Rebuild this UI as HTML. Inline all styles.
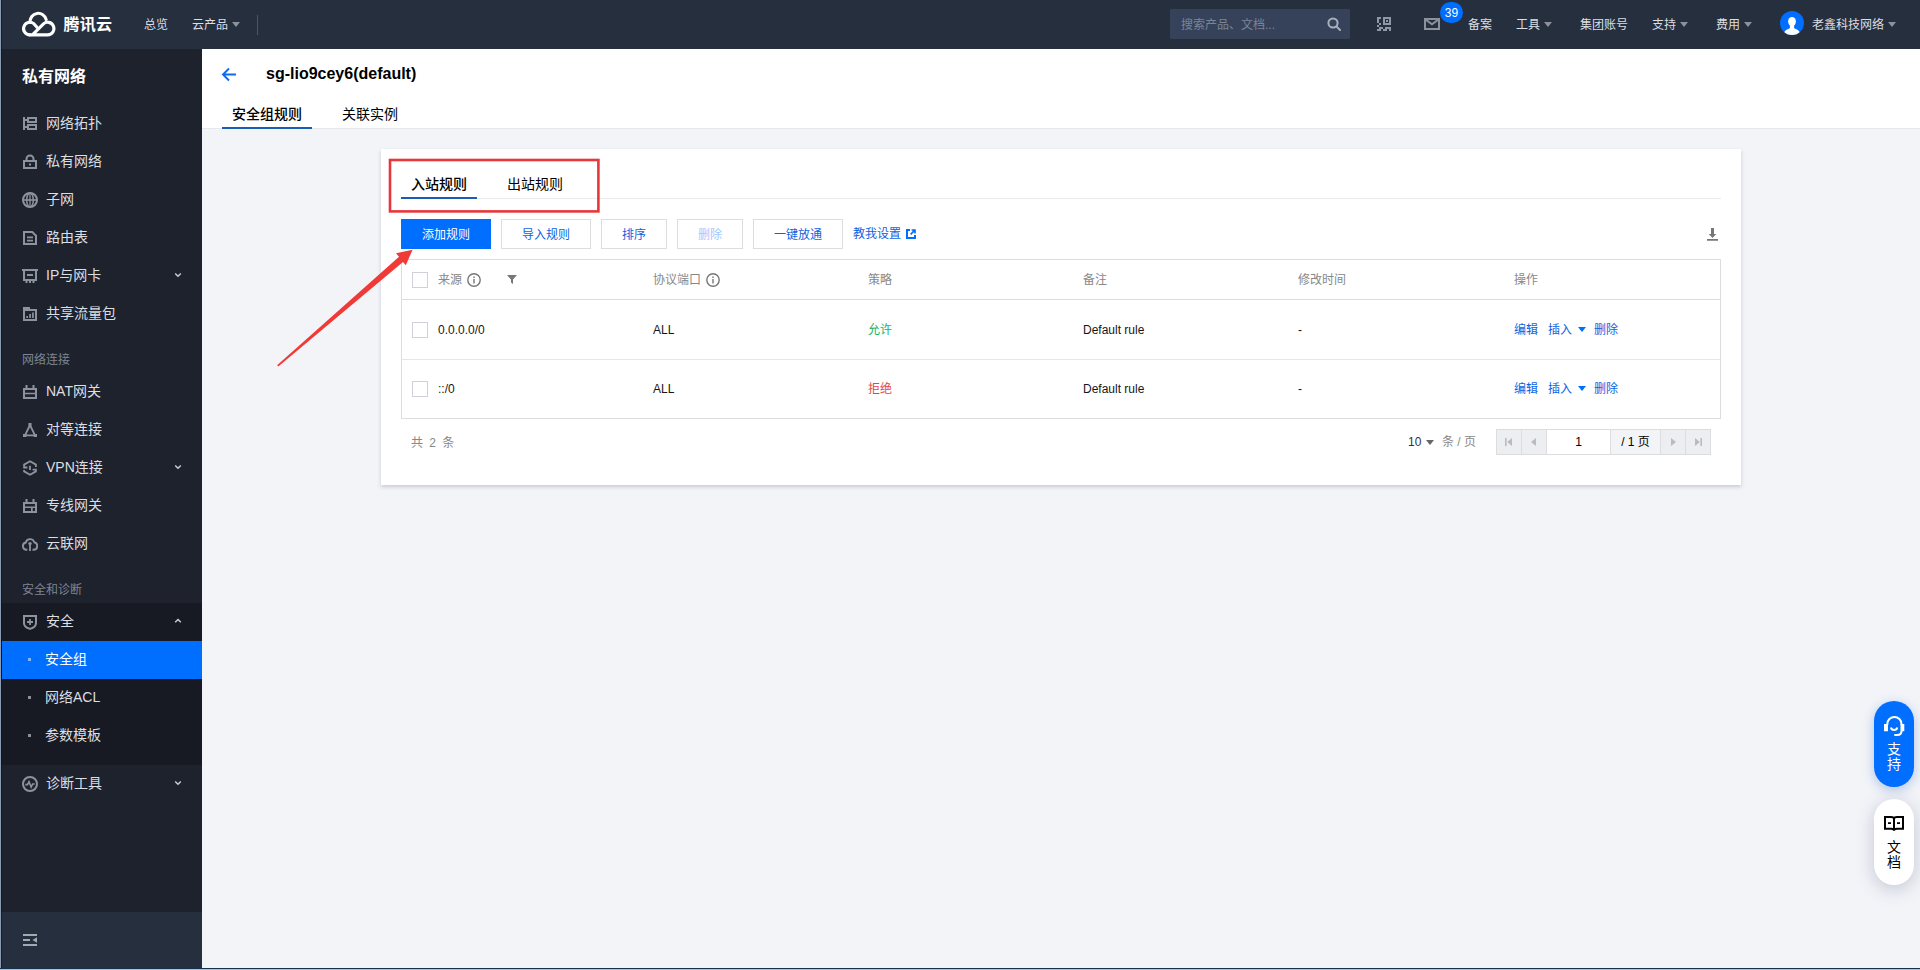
<!DOCTYPE html>
<html lang="zh-CN">
<head>
<meta charset="utf-8">
<title>安全组 - 私有网络 - 腾讯云</title>
<style>
*{box-sizing:border-box;margin:0;padding:0}
html,body{width:1920px;height:970px;overflow:hidden;background:#f2f4f8}
body{font-family:"Liberation Sans","Noto Sans CJK SC",sans-serif;font-size:12px;color:#000;position:relative}
.abs{position:absolute}
#edgeL{left:0;top:0;width:1px;height:970px;background:#8a9bb3;z-index:50}
#edgeL2{left:1px;top:0;width:1px;height:970px;background:rgba(0,10,35,.45);z-index:50}
#edgeB{left:0;top:968px;width:1920px;height:2px;background:linear-gradient(#16324d 0,#16324d 50%,#a5c2dc 50%,#a5c2dc 100%);z-index:50}
/* top bar */
#top{z-index:5;left:0;top:0;width:1920px;height:49px;background:#262f3e;color:#e3e5e8}
#top .t{position:absolute;top:0;height:49px;line-height:50px;font-size:12px;white-space:nowrap;color:#dcdee2}
.caret{position:absolute;width:0;height:0;border-left:4px solid transparent;border-right:4px solid transparent;border-top:5px solid #8b919d;top:22px}
#logoText{position:absolute;left:63.5px;top:0;height:49px;line-height:49px;font-size:16px;color:#fff;font-weight:700;letter-spacing:.3px}
#search{position:absolute;left:1170px;top:9px;width:180px;height:30px;background:#36425a;border-radius:1px}
#search span{position:absolute;left:11px;top:0;line-height:32px;font-size:12px;color:#7a8597}
#badge{position:absolute;left:1440px;top:2px;width:23px;height:21px;border-radius:11px;background:#006eff;color:#fff;font-size:12px;line-height:23px;text-align:center}
/* sidebar */
#side{left:0;top:48px;width:202px;height:920px;background:#1e222d;color:#d7d9dd}
#sideTitle{position:absolute;left:22px;top:15px;font-size:16px;font-weight:bold;color:#fff;line-height:28px}
.mi{position:absolute;left:2px;width:200px;height:38px;line-height:37px;font-size:14px;color:#dcdee2;padding-left:44px;white-space:nowrap}
.mi svg.ic{position:absolute}
.mi svg.ch{position:absolute;left:171px;top:14px;width:10px;height:10px}
.sec{position:absolute;left:22px;font-size:12px;color:#7f8590;line-height:20px}
#subbg{position:absolute;left:0;top:555px;width:202px;height:162px;background:#171a23}
.sub{position:absolute;left:2px;width:200px;height:38px;line-height:37px;font-size:14px;color:#dcdee2;padding-left:43px}
.sub i{position:absolute;left:26px;top:17px;width:3px;height:3px;background:#8a8f99}
.sub.on{background:#006eff;color:#fff}
.sub.on i{background:#7fb6ff}
#sideFoot{position:absolute;left:0;top:864px;width:202px;height:56px;background:#262f3e}

/* main */
#head{left:202px;top:49px;width:1718px;height:80px;background:#fff;border-bottom:1px solid #e5e8ed}
#title{position:absolute;left:266px;top:62px;font-size:16px;font-weight:bold;line-height:24px;color:#000;white-space:nowrap}
.ptab{position:absolute;top:101px;height:28px;line-height:26px;font-size:14px;color:#000;padding:0 10px;white-space:nowrap}
.ptab.on{border-bottom:2px solid #1a5db5;font-weight:500}
#card{left:381px;top:149px;width:1360px;height:336px;background:#fff;box-shadow:0 2px 4px rgba(54,58,80,.22)}
.ctab{position:absolute;top:171px;height:28px;line-height:26px;font-size:14px;color:#000;padding:0 10px;white-space:nowrap}
.ctab.on{border-bottom:2px solid #1a5db5;font-weight:500;z-index:2}
#ctline{left:401px;top:198px;width:1320px;height:1px;background:#ebebeb}
.btn{position:absolute;top:219px;height:30px;line-height:30px;border:1px solid #ddd;background:#fff;color:#0d63e0;font-size:12px;text-align:center;white-space:nowrap}
.btn.pri{background:#006eff;border-color:#006eff;color:#fff}
.btn.dis{color:#a3c8ff}

#tbl{left:401px;top:259px;width:1320px;height:160px;border:1px solid #ddd}
.hl{position:absolute;left:402px;width:1318px;height:1px;background:#ddd}
.th{position:absolute;top:260px;height:39px;line-height:41px;color:#888;font-size:12px;white-space:nowrap}
.td{position:absolute;height:59px;line-height:61px;font-size:12px;color:#161616;white-space:nowrap}
.r1{top:300px}.r2{top:359px}
.cb{position:absolute;left:412px;width:16px;height:16px;border:1px solid #cfd3d9;background:#fff}
.gray{color:#888}
.link,.td.link{color:#0d63e0}
.pg{position:absolute;top:429px;height:26px;border:1px solid #ddd;background:#eceef1;line-height:24px;text-align:center;font-size:12px}
.pill{position:absolute;left:1874px;width:40px;height:86px;border-radius:20px;text-align:center;font-size:14px;line-height:16px}
</style>
</head>
<body>
<div id="top" class="abs">
  <svg class="abs" style="left:0;top:0" width="60" height="48" viewBox="0 0 60 48" fill="none" stroke="#fff" stroke-width="3.1" stroke-linecap="round" stroke-linejoin="round">
    <path d="M29.8 34.85H47.66A6.3 6.3 0 1 0 43.2 24.05L32.4 34.85"/>
    <path d="M29.8 34.85A6.3 6.3 0 1 1 33.85 23.67L37 27.3"/>
    <path d="M30.15 22.2A8.15 8.15 0 0 1 46.2 19.6"/>
  </svg>
  <div id="logoText">腾讯云</div>
  <div class="t" style="left:144px">总览</div>
  <div class="t" style="left:192px">云产品</div><i class="caret" style="left:232px"></i>
  <div class="abs" style="left:257px;top:15px;width:1px;height:20px;background:#4b5463"></div>
  <div id="search"><span>搜索产品、文档...</span>
    <svg class="abs" style="left:157px;top:8px" width="14" height="14" viewBox="0 0 14 14" fill="none" stroke="#a9b0bc" stroke-width="2"><circle cx="6" cy="6" r="4.6"/><path d="M9.4 9.4L13 13" stroke-linecap="round"/></svg>
  </div>
  <svg class="abs" style="left:1377px;top:17px" width="14" height="14" viewBox="0 0 14 14" fill="#8e98a7"><path d="M0 0h4v2H2v4H0zM6 0h8v8H6zM8 2v4h4V2zM9 3h2v2H9zM2 6h2v2H2zM0 8h2v2H0zM2 10h4v2H2zM8 10h6v4h-2v-2H8zM0 12h4v2H0zM6 12h4v2H6z" fill-rule="evenodd"/></svg>
  <svg class="abs" style="left:1424px;top:18px" width="16" height="12" viewBox="0 0 16 12" fill="none" stroke="#8b919d" stroke-width="2"><rect x="1" y="1" width="14" height="10"/><path d="M1.500 1.500L8 6.300L14.500 1.500"/></svg>
  <div id="badge">39</div>
  <div class="t" style="left:1468px">备案</div>
  <div class="t" style="left:1516px">工具</div><i class="caret" style="left:1544px"></i>
  <div class="t" style="left:1580px">集团账号</div>
  <div class="t" style="left:1652px">支持</div><i class="caret" style="left:1680px"></i>
  <div class="t" style="left:1716px">费用</div><i class="caret" style="left:1744px"></i>
  <svg class="abs" style="left:1780px;top:11px" width="24" height="24" viewBox="0 0 24 24"><defs><clipPath id="av"><circle cx="12" cy="12" r="12"/></clipPath></defs><circle cx="12" cy="12" r="12" fill="#006eff"/><g clip-path="url(#av)" fill="#fff"><ellipse cx="12" cy="10.600" rx="3.900" ry="4.700"/><path d="M3.500 24C3.500 20 7 18.300 9.800 17.200L10 14h4l.200 3.200C17 18.300 20.500 20 20.500 24Z"/></g></svg>
  <div class="t" style="left:1812px">老鑫科技网络</div><i class="caret" style="left:1888px"></i>
</div>

<div id="side" class="abs">
  <div id="sideTitle">私有网络</div>
  <div id="subbg"></div>
  <div class="mi" style="top:57px"><svg class="ic" style="left:21px;top:12px" width="14" height="13" viewBox="0 0 14 13" fill="none" stroke="#8d939e" stroke-width="2"><path d="M0 0h2v13H0zM2 2h2v2H2zM2 9h2v2H2z" fill="#8d939e" stroke="none"/><rect x="5" y="1" width="8" height="4"/><rect x="5" y="8" width="8" height="4"/></svg>网络拓扑</div>
  <div class="mi" style="top:95px"><svg class="ic" style="left:21px;top:11px" width="14" height="15" viewBox="0 0 14 15" fill="none" stroke="#8d939e" stroke-width="2"><rect x="1" y="7" width="12" height="7"/><path d="M3.500 6.500V5a3.500 3.500 0 0 1 7 0v1.500"/><path d="M6 9.500h2v2H6z" fill="#8d939e" stroke="none"/></svg>私有网络</div>
  <div class="mi" style="top:133px"><svg class="ic" style="left:20px;top:11px" width="16" height="16" viewBox="0 0 16 16" fill="none" stroke="#8d939e" stroke-width="2"><circle cx="8" cy="8" r="7"/><path d="M1 8h14" stroke-width="1.600"/><ellipse cx="8" cy="8" rx="3.300" ry="7" stroke-width="1.500"/><path d="M8 1v14" stroke-width="1.300"/></svg>子网</div>
  <div class="mi" style="top:171px"><svg class="ic" style="left:21px;top:12px" width="14" height="14" viewBox="0 0 14 14" fill="none" stroke="#8d939e" stroke-width="2"><path d="M1 1h8.300L13 4.700V13H1z"/><path d="M4 6.300h6M4 9.700h6" stroke-width="1.700"/></svg>路由表</div>
  <div class="mi" style="top:209px"><svg class="ic" style="left:20px;top:12px" width="16" height="14" viewBox="0 0 16 14" fill="none" stroke="#8d939e" stroke-width="2"><rect x="2" y="1" width="12" height="10"/><path d="M0 0h16v2H0zM3.500 12h2v2h-2zM7 12h2v2H7zM10.500 12h2v2h-2zM5 5h6v2H5z" fill="#8d939e" stroke="none"/></svg>IP与网卡<svg class="ch" viewBox="0 0 10 10" fill="none" stroke="#c9cdd4" stroke-width="1.500"><path d="M2.200 2.500L5 5.200l2.800-2.700"/></svg></div>
  <div class="mi" style="top:247px"><svg class="ic" style="left:21px;top:12px" width="14" height="14" viewBox="0 0 14 14" fill="none" stroke="#8d939e" stroke-width="2"><path d="M1 3h12v10H1z"/><path d="M0 0h7v3H0zM3.300 9h1.700v2H3.300zM6.200 7h1.700v4H6.200zM9.100 5.500h1.700V11H9.100z" fill="#8d939e" stroke="none"/></svg>共享流量包</div>
  <div class="mi" style="top:325px"><svg class="ic" style="left:21px;top:12px" width="14" height="14" viewBox="0 0 14 14" fill="none" stroke="#8d939e" stroke-width="2"><rect x="1" y="4" width="12" height="9"/><path d="M2.500 0h2v4h-2zM9.500 0h2v4h-2zM1 7.700h12v1.600H1z" fill="#8d939e" stroke="none"/></svg>NAT网关</div>
  <div class="mi" style="top:363px"><svg class="ic" style="left:21px;top:12px" width="14" height="14" viewBox="0 0 14 14" fill="none" stroke="#8d939e" stroke-width="2"><path d="M7 2L2 12.300h10z" stroke-width="1.800"/><path d="M5.500 0h3v3h-3zM0 11h3.300v3H0zM10.700 11H14v3h-3.300z" fill="#8d939e" stroke="none"/></svg>对等连接</div>
  <div class="mi" style="top:401px"><svg class="ic" style="left:21px;top:11px" width="14" height="16" viewBox="0 0 14 16" fill="none" stroke="#8d939e" stroke-width="2"><path d="M4.400 7.500H1.100V4.600L7 1.200l5.900 3.400V7M9.600 9.700h3.300v1.700L7 14.800 1.100 11.400V10" stroke-width="1.800"/><path d="M6.100 5.700h1.800V10H6.100z" fill="#8d939e" stroke="none"/></svg>VPN连接<svg class="ch" viewBox="0 0 10 10" fill="none" stroke="#c9cdd4" stroke-width="1.500"><path d="M2.200 2.500L5 5.200l2.800-2.700"/></svg></div>
  <div class="mi" style="top:439px"><svg class="ic" style="left:21px;top:12px" width="14" height="14" viewBox="0 0 14 14" fill="none" stroke="#8d939e" stroke-width="2"><rect x="1" y="4" width="12" height="9"/><path d="M2.500 0h2v4h-2zM9.500 0h2v4h-2zM1 7.500h12v1.600H1zM8 9h1.700v4H8z" fill="#8d939e" stroke="none"/></svg>专线网关</div>
  <div class="mi" style="top:477px"><svg class="ic" style="left:20px;top:11px" width="16" height="15" viewBox="0 0 16 15" fill="none" stroke="#8d939e" stroke-width="2"><path d="M5.300 13.800H4.700a3.700 3.700 0 0 1-.9-7.300 4.400 4.400 0 0 1 8.500-.2 3.800 3.800 0 0 1-.8 7.500H10.500" stroke-width="1.900"/><circle cx="8" cy="7.600" r="1.700" fill="#8d939e" stroke="none"/><path d="M7.100 8h1.800v7H7.100z" fill="#8d939e" stroke="none"/></svg>云联网</div>
  <div class="mi" style="top:555px"><svg class="ic" style="left:21px;top:12px" width="14" height="15" viewBox="0 0 14 15" fill="none" stroke="#8d939e" stroke-width="2"><path d="M1 1h12v7.200c0 3-2.600 4.700-6 5.700C3.600 12.900 1 11.200 1 8.200z"/><path d="M7 4v6M4 7h6" stroke-width="1.800"/></svg>安全<svg class="ch" viewBox="0 0 10 10" fill="none" stroke="#c9cdd4" stroke-width="1.500"><path d="M2.200 5.200L5 2.500l2.800 2.700"/></svg></div>
  <div class="mi" style="top:717px"><svg class="ic" style="left:20px;top:11px" width="16" height="16" viewBox="0 0 16 16" fill="none" stroke="#8d939e" stroke-width="2"><circle cx="8" cy="8" r="7"/><path d="M3.300 8.600h2.200l1.500-3 2.200 5.400 1.500-3h2" stroke-width="1.600"/></svg>诊断工具<svg class="ch" viewBox="0 0 10 10" fill="none" stroke="#c9cdd4" stroke-width="1.500"><path d="M2.200 2.500L5 5.200l2.800-2.700"/></svg></div>
  <div class="sec" style="top:302px">网络连接</div>
  <div class="sec" style="top:532px">安全和诊断</div>
  <div class="sub on" style="top:593px"><i></i>安全组</div>
  <div class="sub" style="top:631px"><i></i>网络ACL</div>
  <div class="sub" style="top:669px"><i></i>参数模板</div>
  <div id="sideFoot"><svg class="abs" style="left:23px;top:22px" width="15" height="13" viewBox="0 0 15 13" fill="#a3a8b1"><path d="M0 0h14v2H0zM0 5h7v2H0zM0 10h14v2H0zM14 3.200v5.600L9.500 6z"/></svg></div>
</div>
<div id="head" class="abs"></div>
<svg class="abs" style="left:221px;top:66.500px" width="16" height="15" viewBox="0 0 16 15" fill="none" stroke="#0f6aee" stroke-width="1.900"><path d="M15 7.500H2.500M8 1.500L2 7.500l6 6"/></svg>
<div id="title">sg-lio9cey6(default)</div>
<div class="ptab on" style="left:222px">安全组规则</div>
<div class="ptab" style="left:332px">关联实例</div>

<div id="card" class="abs"></div>
<div class="ctab on" style="left:401px">入站规则</div>
<div class="ctab" style="left:497px">出站规则</div>
<div id="ctline" class="abs"></div>
<svg class="abs" style="left:380px;top:150px;z-index:3" width="230" height="70" viewBox="380 150 230 70"><rect x="390" y="160" width="208.400" height="51.400" fill="none" stroke="#e8373a" stroke-width="2.600"/></svg>

<div class="btn pri" style="left:401px;width:90px">添加规则</div>
<div class="btn" style="left:501px;width:90px">导入规则</div>
<div class="btn" style="left:601px;width:66px">排序</div>
<div class="btn dis" style="left:677px;width:66px">删除</div>
<div class="btn" style="left:753px;width:90px">一键放通</div>
<div class="abs link" style="left:853px;top:219px;line-height:30px;font-size:12px">教我设置</div>
<svg class="abs" style="left:906px;top:229px" width="10" height="10" viewBox="0 0 10 10" fill="none" stroke="#006eff" stroke-width="2"><path d="M4 1H1v8h8V6"/><path d="M4.600 5.400L8.600 1.400M5.600 1h3.400v3.400" stroke-width="1.600"/></svg>
<svg class="abs" style="left:1706px;top:228px" width="13" height="13" viewBox="0 0 13 13" fill="#777"><path d="M5 0h3v6h2.300L6.500 10 2.700 6H5zM1 11h11v1.800H1z"/></svg>

<div id="tbl" class="abs"></div>
<div class="hl" style="top:299px"></div><div class="hl" style="top:359px;background:#e6e6e6"></div>
<div class="cb" style="top:272px"></div><div class="cb" style="top:322px"></div><div class="cb" style="top:381px"></div>
<div class="th" style="left:438px">来源</div>
<svg class="abs ii" style="left:467px;top:273px" width="14" height="14" viewBox="0 0 14 14"><circle cx="7" cy="7" r="6.200" fill="none" stroke="#777" stroke-width="1.400"/><path d="M6.300 6h1.400v4.500H6.300zM6.300 3.500h1.400v1.500H6.300z" fill="#777"/></svg>
<svg class="abs" style="left:507px;top:275px" width="10" height="9" viewBox="0 0 10 9" fill="#777"><path d="M0 0h10L6 4.500V9L4 7.500v-3z"/></svg>
<div class="th" style="left:653px">协议端口</div>
<svg class="abs ii" style="left:706px;top:273px" width="14" height="14" viewBox="0 0 14 14"><circle cx="7" cy="7" r="6.200" fill="none" stroke="#777" stroke-width="1.400"/><path d="M6.300 6h1.400v4.500H6.300zM6.300 3.500h1.400v1.500H6.300z" fill="#777"/></svg>
<div class="th" style="left:868px">策略</div>
<div class="th" style="left:1083px">备注</div>
<div class="th" style="left:1298px">修改时间</div>
<div class="th" style="left:1514px">操作</div>

<div class="td r1" style="left:438px">0.0.0.0/0</div>
<div class="td r1" style="left:653px">ALL</div>
<div class="td r1" style="left:868px;color:#1cb35f">允许</div>
<div class="td r1" style="left:1083px">Default rule</div>
<div class="td r1" style="left:1298px">-</div>
<div class="td r1 link" style="left:1514px">编辑</div>
<div class="td r1 link" style="left:1548px">插入</div>
<i class="caret" style="left:1578px;top:327px;border-top-color:#006eff"></i>
<div class="td r1 link" style="left:1594px">删除</div>

<div class="td r2" style="left:438px">::/0</div>
<div class="td r2" style="left:653px">ALL</div>
<div class="td r2" style="left:868px;color:#e54545">拒绝</div>
<div class="td r2" style="left:1083px">Default rule</div>
<div class="td r2" style="left:1298px">-</div>
<div class="td r2 link" style="left:1514px">编辑</div>
<div class="td r2 link" style="left:1548px">插入</div>
<i class="caret" style="left:1578px;top:386px;border-top-color:#006eff"></i>
<div class="td r2 link" style="left:1594px">删除</div>

<div class="abs gray" style="left:411px;top:430px;line-height:26px;font-size:12px;word-spacing:3px">共 2 条</div>
<div class="abs" style="left:1408px;top:429px;line-height:26px;font-size:12px;color:#333">10</div>
<i class="caret" style="left:1426px;top:440px;border-top-color:#666"></i>
<div class="abs gray" style="left:1442px;top:429px;line-height:26px;font-size:12px">条 / 页</div>
<div class="pg" style="left:1496px;width:26px"><svg style="position:absolute;left:8px;top:8px" width="7" height="8" viewBox="0 0 7 8" fill="#bbb"><path d="M0 0h1.600v8H0zM7 0v8L2.200 4z"/></svg></div>
<div class="pg" style="left:1521px;width:26px"><svg style="position:absolute;left:9px;top:8px" width="5" height="8" viewBox="0 0 5 8" fill="#bbb"><path d="M5 0v8L0 4z"/></svg></div>
<div class="pg" style="left:1546px;width:65px;background:#fff;color:#000">1</div>
<div class="pg" style="left:1610px;width:51px;background:#f2f4f7;color:#000">/ 1 页</div>
<div class="pg" style="left:1660px;width:26px"><svg style="position:absolute;left:10px;top:8px" width="5" height="8" viewBox="0 0 5 8" fill="#bbb"><path d="M0 0v8L5 4z"/></svg></div>
<div class="pg" style="left:1685px;width:26px"><svg style="position:absolute;left:9px;top:8px" width="7" height="8" viewBox="0 0 7 8" fill="#bbb"><path d="M5.400 0H7v8H5.400zM0 0v8L4.800 4z"/></svg></div>

<svg class="abs" style="left:270px;top:240px" width="160" height="135" viewBox="270 240 160 135"><path d="M277.100 365.200L278.300 366.400L403 262L405.800 265.200L412.600 249.700L396 253.300L399 256.800Z" fill="#f03a37"/></svg>

<div class="pill" style="top:701px;background:#006eff;color:#fff;box-shadow:0 3px 12px rgba(0,70,180,.28)">
<svg style="position:absolute;left:10px;top:15px" width="21" height="20" viewBox="0 0 21 20" fill="none" stroke="#fff" stroke-width="2"><path d="M3.300 9V8.100a7.100 7.100 0 0 1 14.200 0V9"/><path d="M0 8h4v7.300H0zM16.500 8h3.800v7.300h-3.800z" fill="#fff" stroke="none"/><path d="M6.900 11.400a3.300 3.300 0 0 0 6.400 0"/><path d="M17.500 15c0 2.600-1.600 4-4.200 4H10.300"/></svg>
<div style="position:absolute;left:0;width:40px;top:41px;line-height:15px">支<br>持</div></div>
<div class="pill" style="top:799px;background:#fff;color:#000;box-shadow:0 4px 18px rgba(60,70,110,.26)">
<svg style="position:absolute;left:10px;top:17px" width="20" height="16" viewBox="0 0 20 16" fill="none" stroke="#000" stroke-width="2"><path d="M1 1h6c1.700 0 3 .800 3 2 0-1.200 1.300-2 3-2h6v11.800h-6c-1.700 0-3 .800-3 2 0-1.200-1.300-2-3-2H1z"/><path d="M10 3v11"/><path d="M4 6.200h3v1.700H4zM13 6.200h3v1.700h-3z" fill="#000" stroke="none"/></svg>
<div style="position:absolute;left:0;width:40px;top:41px;line-height:15px">文<br>档</div></div>
<div id="edgeL" class="abs"></div><div id="edgeL2" class="abs"></div><div id="edgeB" class="abs"></div>
</body>
</html>
